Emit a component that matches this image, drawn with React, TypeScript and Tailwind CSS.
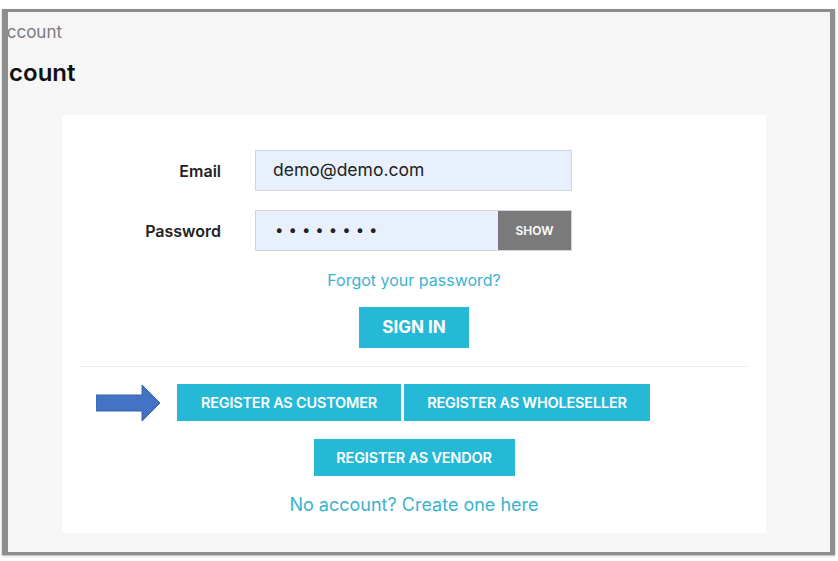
import React from "react";

export default function App() {
  return (
    <div className="w-[838px] h-[561px] bg-white overflow-hidden" style={{ fontFamily: "Inter, 'Noto Sans', sans-serif" }}>
      <div className="ml-[2px] mt-[9px] w-[833px] h-[546px] border-l-[6px] border-t-[3px] border-r-[5px] border-b-[3px] border-[#8e8e8e] bg-[#f6f6f6] overflow-hidden shadow-[0_1px_2px_rgba(0,0,0,0.3)]">
        <div className="h-[24px] mt-[8px] -ml-[13px] text-[17px] leading-[24px] text-[#7a7a7a] whitespace-nowrap">Account</div>
        <div className="h-[32px] mt-[13px] -ml-[30px] text-[24px] leading-[32px] font-semibold text-[#111] whitespace-nowrap">Account</div>
        <div className="ml-[54px] mt-[26px] w-[704px] h-[418px] bg-white px-[18px] pt-[35px] flex flex-col">
          <div className="flex items-center h-[41px]">
            <div className="w-[141px] text-right text-[16px] font-semibold text-[#222]">Email</div>
            <div className="ml-[34px] w-[317px] h-[41px] bg-[#e8f0fe] border border-[#cfd6e0] flex items-center pl-[17px] text-[17.5px] text-[#222]">demo@demo.com</div>
          </div>
          <div className="flex items-center h-[41px] mt-[19px]">
            <div className="w-[141px] text-right text-[16px] font-semibold text-[#222]">Password</div>
            <div className="ml-[34px] w-[317px] h-[41px] border border-[#cfd6e0] flex">
              <div className="flex-1 bg-[#e8f0fe] flex items-center pl-[19px] text-[15px] tracking-[5px] text-[#222]">••••••••</div>
              <div className="w-[73px] bg-[#7a7a7a] flex items-center justify-center text-white text-[12px] font-semibold">SHOW</div>
            </div>
          </div>
          <div className="mt-[17px] text-center text-[16px] leading-[24px] text-[#3ab3cf]">Forgot your password?</div>
          <div className="mt-[15px] flex justify-center">
            <div className="w-[110px] h-[41px] bg-[#25b9d7] text-white text-[17px] font-bold flex items-center justify-center">SIGN IN</div>
          </div>
          <div className="mt-[18px] h-px bg-[#ebebeb]"></div>
          <div className="mt-[17px] flex items-center">
            <svg width="66" height="36" viewBox="0 0 66 36" className="ml-[16px]">
              <polygon points="0,10 46,10 46,0 64,18 46,36 46,26 0,26" fill="#4472c4" stroke="#3a62ab" strokeWidth="1" />
            </svg>
            <div className="ml-[15px] w-[224px] h-[37px] bg-[#25b9d7] text-white text-[14.5px] font-semibold tracking-[-0.2px] flex items-center justify-center">REGISTER AS CUSTOMER</div>
            <div className="ml-[3px] w-[246px] h-[37px] bg-[#25b9d7] text-white text-[14.5px] font-semibold tracking-[-0.2px] flex items-center justify-center">REGISTER AS WHOLESELLER</div>
          </div>
          <div className="mt-[18px] flex justify-center">
            <div className="w-[201px] h-[37px] bg-[#25b9d7] text-white text-[14.5px] font-semibold tracking-[-0.2px] flex items-center justify-center">REGISTER AS VENDOR</div>
          </div>
          <div className="mt-[16px] text-center text-[18px] leading-[26px] text-[#3ab3cf]">No account? Create one here</div>
        </div>
      </div>
    </div>
  );
}
